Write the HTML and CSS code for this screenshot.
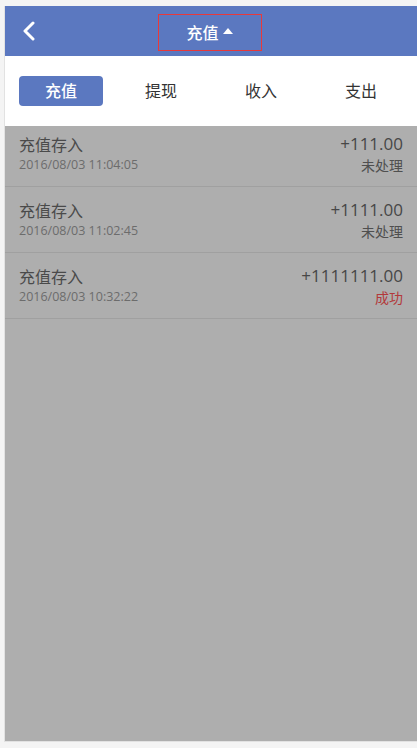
FILE: index.html
```html
<!DOCTYPE html>
<html lang="zh">
<head>
<meta charset="utf-8">
<title>充值</title>
<link rel="stylesheet" href="styles.css">
</head>
<body>
<div class="app">
  <header class="header">
    <a class="back" href="#">
      <svg width="14" height="20" viewBox="0 0 14 20"><path d="M11 2 L3 10 L11 18" fill="none" stroke="#fff" stroke-width="3" stroke-linecap="round" stroke-linejoin="round"/></svg>
    </a>
    <div class="title">充值<span class="caret"></span></div>
  </header>
  <nav class="tabs">
    <span class="tab active">充值</span>
    <span class="tab">提现</span>
    <span class="tab">收入</span>
    <span class="tab">支出</span>
  </nav>
  <div class="list">
    <div class="row first">
      <div class="left"><div class="name">充值存入</div><div class="date">2016/08/03 11:04:05</div></div>
      <div class="right"><div class="amount">+111.00</div><div class="status">未处理</div></div>
    </div>
    <div class="row">
      <div class="left"><div class="name">充值存入</div><div class="date">2016/08/03 11:02:45</div></div>
      <div class="right"><div class="amount">+1111.00</div><div class="status">未处理</div></div>
    </div>
    <div class="row">
      <div class="left"><div class="name">充值存入</div><div class="date">2016/08/03 10:32:22</div></div>
      <div class="right"><div class="amount">+1111111.00</div><div class="status ok">成功</div></div>
    </div>
  </div>
</div>
</body>
</html>
```
FILE: styles.css
```css
html, body { margin: 0; padding: 0; }
body {
  background: #f4f4f4;
  font-family: "Open Sans", "Noto Sans CJK SC", sans-serif;
  padding: 6px 0 6px 4px;
  height: 748px;
  box-sizing: border-box;
}
.app {
  height: 736px;
  display: flex;
  flex-direction: column;
  background: #aeaeae;
  border-left: 1px solid #e2e2e2;
  border-bottom: 1px solid #e2e2e2;
  box-sizing: border-box;
}
.header {
  height: 50px;
  background: #5b78c0;
  position: relative;
  display: flex;
  align-items: center;
  justify-content: center;
  flex-shrink: 0;
}
.back {
  position: absolute;
  left: 17px;
  top: 15px;
  display: block;
  width: 14px;
  height: 20px;
}
.title {
  width: 102px;
  height: 35px;
  border: 1px solid #e8393a;
  color: #fff;
  font-size: 16px;
  font-weight: 500;
  display: flex;
  align-items: center;
  justify-content: center;
  gap: 4px;
  margin-top: 2px;
  margin-left: -3px;
}
.caret {
  width: 0; height: 0;
  border-left: 5px solid transparent;
  border-right: 5px solid transparent;
  border-bottom: 6px solid #fff;
  margin-top: -2px;
}
.tabs {
  height: 70px;
  background: #fff;
  display: flex;
  align-items: center;
  gap: 16px;
  padding-left: 14px;
  flex-shrink: 0;
}
.tab {
  width: 84px;
  height: 30px;
  line-height: 30px;
  text-align: center;
  font-size: 16px;
  color: #333;
  border-radius: 4px;
}
.tab.active { background: #5b78c0; color: #fff; font-weight: 500; }
.list { display: flex; flex-direction: column; }
.row {
  display: flex;
  justify-content: space-between;
  padding: 14px 14px 13px 14px;
  border-bottom: 1px solid #a0a0a0;
  height: 66px;
  box-sizing: border-box;
}
.row.first { padding-top: 9px; height: 61px; }
.left { display: flex; flex-direction: column; gap: 2px; }
.name { font-size: 16px; line-height: 20px; color: #4a4a4a; }
.date { font-size: 12.5px; line-height: 16px; color: #6c6c6c; }
.right { display: flex; flex-direction: column; align-items: flex-end; gap: 2px; margin-top: -1px; }
.amount { font-size: 17px; line-height: 20px; color: #474747; }
.status { font-size: 14px; line-height: 19px; color: #4f4f4f; }
.status.ok { color: #b3393b; }
```
